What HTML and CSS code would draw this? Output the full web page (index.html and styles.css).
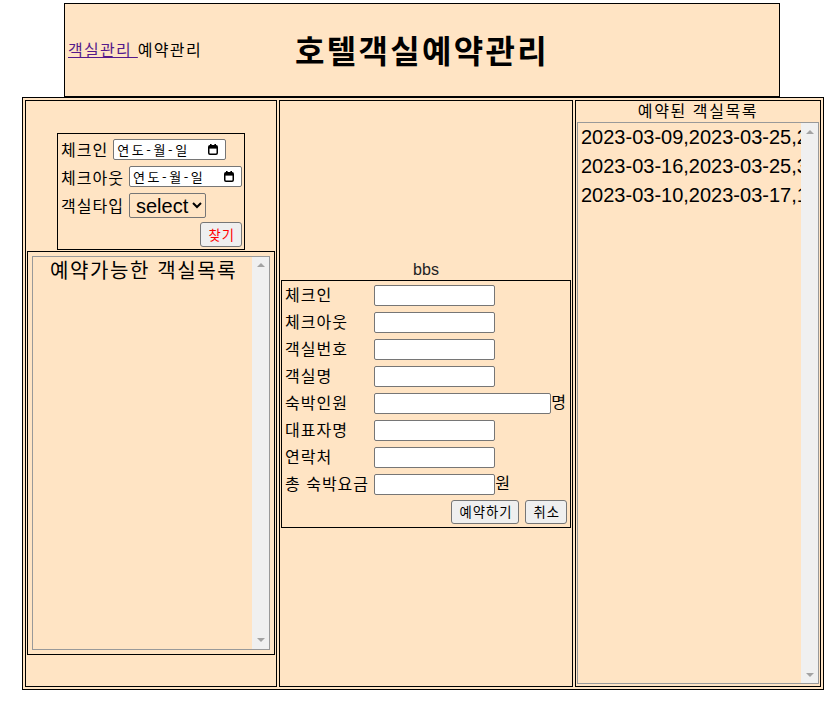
FILE: index.html
```html
<!DOCTYPE html>
<html lang="ko">

<head>
    <meta charset="UTF-8">
    <title>호텔객실예약관리</title>
    <link rel="stylesheet" href="styles.css">
</head>

<body>
    <div class="page">
        <div class="header">
            <div class="nav"><a href="#">객실관리 </a>예약관리</div>
            <h1>호텔객실예약관리</h1>
            <div></div>
        </div>

        <table class="main">
            <tr>
                <td class="col-search">
                    <form class="search" action="javascript:void(0);">
                        <div class="row row1">
                            <span>체크인</span>
                            <span class="date">
                                <input type="text" placeholder="연도-월-일">
                                <svg width="10" height="11" viewBox="0 0 10 11">
                                    <rect x="2" y="0" width="1.6" height="2.5" fill="#000" />
                                    <rect x="6.4" y="0" width="1.6" height="2.5" fill="#000" />
                                    <rect x="0.75" y="1.75" width="8.5" height="8.5" rx="1.2" fill="none" stroke="#000" stroke-width="1.5" />
                                    <rect x="1" y="2" width="8" height="2.6" fill="#000" />
                                </svg>
                            </span>
                        </div>
                        <div class="row row2">
                            <span>체크아웃</span>
                            <span class="date">
                                <input type="text" placeholder="연도-월-일">
                                <svg width="10" height="11" viewBox="0 0 10 11">
                                    <rect x="2" y="0" width="1.6" height="2.5" fill="#000" />
                                    <rect x="6.4" y="0" width="1.6" height="2.5" fill="#000" />
                                    <rect x="0.75" y="1.75" width="8.5" height="8.5" rx="1.2" fill="none" stroke="#000" stroke-width="1.5" />
                                    <rect x="1" y="2" width="8" height="2.6" fill="#000" />
                                </svg>
                            </span>
                        </div>
                        <div class="row row3">
                            <span>객실타입</span>
                            <select class="type">
                                <option>select</option>
                                <option>싱글</option>
                                <option>더블</option>
                                <option>스위트</option>
                            </select>
                        </div>
                        <div class="row-btn">
                            <button type="submit" class="find">찾기</button>
                        </div>
                    </form>

                    <div class="rooms">
                        <div class="listbox listbox-free">
                            <textarea class="list list-free">예약가능한 객실목록</textarea>
                            <div class="sbar"><span class="arrow up"></span><span class="arrow down"></span></div>
                        </div>
                    </div>
                </td>

                <td class="col-form">
                    <div class="caption">bbs</div>
                    <table class="book">
                        <tr>
                            <td class="lbl">체크인</td>
                            <td><input type="text" class="field"></td>
                        </tr>
                        <tr>
                            <td class="lbl">체크아웃</td>
                            <td><input type="text" class="field"></td>
                        </tr>
                        <tr>
                            <td class="lbl">객실번호</td>
                            <td><input type="text" class="field"></td>
                        </tr>
                        <tr>
                            <td class="lbl">객실명</td>
                            <td><input type="text" class="field"></td>
                        </tr>
                        <tr>
                            <td class="lbl">숙박인원</td>
                            <td><input type="text" class="field wide">명</td>
                        </tr>
                        <tr>
                            <td class="lbl">대표자명</td>
                            <td><input type="text" class="field"></td>
                        </tr>
                        <tr>
                            <td class="lbl">연락처</td>
                            <td><input type="text" class="field"></td>
                        </tr>
                        <tr>
                            <td class="lbl">총 숙박요금</td>
                            <td><input type="text" class="field">원</td>
                        </tr>
                        <tr>
                            <td colspan="2">
                                <div class="actions">
                                    <button class="btn">예약하기</button>
                                    <button class="btn">취소</button>
                                </div>
                            </td>
                        </tr>
                    </table>
                </td>

                <td class="col-booked">
                    <div class="booked-title">예약된 객실목록</div>
                    <div class="listbox listbox-booked">
                        <textarea class="list list-booked" wrap="off">2023-03-09,2023-03-25,201,디럭스,2,김민수,010-1234-5678
2023-03-16,2023-03-25,305,스위트,3,이영희,010-2345-6789
2023-03-10,2023-03-17,102,싱글,1,박철수,010-3456-7890</textarea>
                        <div class="sbar"><span class="arrow up"></span><span class="arrow down"></span></div>
                    </div>
                </td>
            </tr>
        </table>
    </div>
</body>

</html>
```

FILE: styles.css
```css
body {
    margin: 0;
    font-family: "Liberation Sans", "Noto Sans CJK KR", sans-serif;
    font-size: 16px;
    letter-spacing: 1px;
    color: #000;
}

.page {
    width: 802px;
    margin: 3px 0 0 22px;
}

/* header */
.header {
    width: 716px;
    height: 94px;
    margin-left: 42px;
    box-sizing: border-box;
    border: 1px solid #000;
    background-color: bisque;
    display: grid;
    grid-template-columns: 1fr auto 1fr;
    align-items: center;
}

.nav {
    padding: 0 0 2px 3px;
    white-space: nowrap;
    letter-spacing: 1.3px;
}

.nav a {
    color: #551a8b;
}

h1 {
    margin: 0 0 3px;
    font-size: 32px;
    font-weight: bold;
    letter-spacing: 2.3px;
}

/* main table */
.main {
    width: 802px;
    height: 593px;
    border: 1px solid #000;
    border-spacing: 2px;
    background-color: bisque;
    table-layout: fixed;
}

.main > tbody > tr > td {
    border: 1px solid #000;
    padding: 1px;
}

.col-search {
    width: 248px;
}

.col-form {
    width: 290px;
}

.col-booked {
    width: 242px;
    vertical-align: top;
}

/* search box */
.search {
    width: fit-content;
    margin: 0 auto;
    border: 1px solid #000;
    padding: 2px 2px 2px 3px;
}

.row {
    display: flex;
    align-items: center;
    gap: 5px;
    white-space: nowrap;
}

.row1 {
    height: 27px;
}

.row2 {
    height: 28px;
}

.row3 {
    height: 29px;
}

.date {
    display: inline-flex;
    align-items: center;
    width: 113px;
    height: 21px;
    box-sizing: border-box;
    border: 1px solid #767676;
    border-radius: 2px;
    background-color: #fff;
    padding: 0 7px 0 3px;
}

.date input {
    flex: 1;
    min-width: 0;
    border: none;
    padding: 0;
    outline: none;
    background: transparent;
    font-family: "Noto Sans CJK KR", sans-serif;
    font-size: 13px;
    letter-spacing: 2.6px;
}

.date input::placeholder {
    color: #000;
}

.type {
    width: 77px;
    height: 25px;
    font-family: "Liberation Sans", sans-serif;
    font-size: 20px;
    background-color: transparent;
    border: 1px solid #767676;
    border-radius: 2px;
    color: #000;
    padding: 0 0 0 2px;
}

.row-btn {
    display: flex;
    justify-content: flex-end;
    margin-top: 2px;
}

.find,
.btn {
    font-family: "Noto Sans CJK KR", sans-serif;
    font-size: 13.33px;
    letter-spacing: 1px;
    background-color: #efefef;
    border: 1px solid #767676;
    border-radius: 3px;
    padding: 0 6px 0 7px;
    cursor: pointer;
}

.find {
    height: 25px;
    color: red;
}

/* list boxes */
.rooms {
    margin-top: 1px;
    border: 1px solid #000;
    padding: 4px;
}

.listbox {
    display: flex;
    box-sizing: border-box;
    border: 1px solid #999;
    background-color: bisque;
}

.listbox-free {
    height: 394px;
}

.listbox-booked {
    height: 562px;
}

.list {
    flex: 1;
    min-width: 0;
    margin: 0;
    border: none;
    outline: none;
    background-color: transparent;
    resize: none;
    overflow: hidden;
    font-family: "Liberation Sans", "Noto Sans CJK KR", sans-serif;
    font-size: 20px;
    color: #000;
}

.list-free {
    padding: 2px 2px 2px 17px;
    line-height: 24px;
    letter-spacing: 1.6px;
}

.list-booked {
    padding: 0 2px 2px 3px;
    line-height: 29px;
    white-space: pre;
}

/* scrollbar strip */
.sbar {
    flex: none;
    width: 17px;
    background-color: #f0f0f0;
    display: flex;
    flex-direction: column;
    justify-content: space-between;
}

.arrow {
    height: 17px;
    display: flex;
    align-items: center;
    justify-content: center;
}

.arrow::before {
    content: "";
    border-left: 4px solid transparent;
    border-right: 4px solid transparent;
}

.arrow.up::before {
    border-bottom: 4px solid #a3a3a3;
}

.arrow.down::before {
    border-top: 4px solid #a3a3a3;
}

/* booking form */
.caption {
    text-align: center;
    color: #222;
    line-height: 20px;
    letter-spacing: 0;
}

.book {
    width: 100%;
    border: 1px solid #000;
    border-spacing: 2px;
}

.book td {
    padding: 1px;
    height: 23px;
    line-height: 21px;
    white-space: nowrap;
}

.book td.lbl {
    width: 86px;
}

.field {
    width: 121px;
    height: 21px;
    box-sizing: border-box;
    border: 1px solid #767676;
    border-radius: 2px;
    background-color: #fff;
    padding: 1px 2px;
    vertical-align: middle;
}

.field.wide {
    width: 177px;
}

.actions {
    display: flex;
    justify-content: flex-end;
    gap: 6px;
}

.btn {
    height: 24px;
}

/* booked list */
.booked-title {
    text-align: center;
    line-height: 20px;
    letter-spacing: 1.6px;
}
```
